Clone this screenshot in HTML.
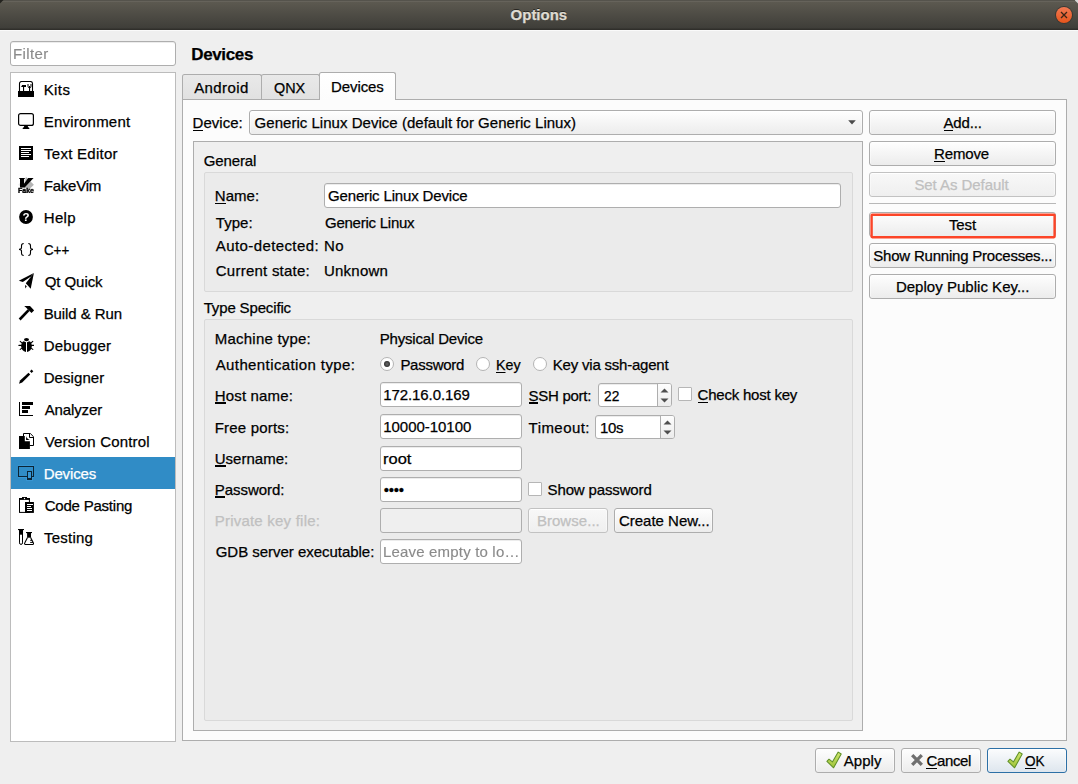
<!DOCTYPE html>
<html><head><meta charset="utf-8"><title>Options</title>
<style>
html,body{margin:0;padding:0}
body{width:1078px;height:784px;overflow:hidden;background:#efefef;position:relative;font-family:"Liberation Sans",sans-serif;font-size:15px;color:#000}
div,span,svg{position:absolute;box-sizing:border-box}
.t{white-space:pre;line-height:20px;height:20px;font-size:15px;-webkit-text-stroke:0.25px currentColor}
.t u{text-decoration:none;background:linear-gradient(currentColor,currentColor) no-repeat 0 16px/100% 1px}
#titlebar{left:0;top:0;width:1078px;height:30px;background:linear-gradient(#55534c 0,#55534c 1px,#66635b 1px,#66635b 2px,#5c5950 2px,#3f3e39 28px,#302f2b 29px,#302f2b 30px)}
#tbhl{left:0;top:30px;width:1078px;height:1px;background:#fafafa}
#cornerl{left:0;top:0;width:3.5px;height:3.5px;background:#24231f}
#cornerr{left:1074.5px;top:0;width:3.5px;height:3.5px;background:#d6d6d6}
.title{text-shadow:0 -1px 0 rgba(0,0,0,.55)}
#close{left:1055px;top:6px;width:18px;height:18px;border-radius:9px;background:#3a3833}
#close i{position:absolute;left:1px;top:1px;width:16px;height:16px;border-radius:8px;background:linear-gradient(#f27a54,#e6551c)}
.edit{background:#fff;border:1px solid #aeaeae;border-radius:3px;height:25px;box-shadow:inset 0 1px 0 #ececec}
.edit.dis{background:#efefef;box-shadow:none}
.btn{border:1px solid #adadad;border-radius:3px;height:25px;background:linear-gradient(#fefefe,#ececec);box-shadow:inset 0 1px 0 rgba(255,255,255,.95),inset 1px 0 0 rgba(255,255,255,.45),inset -1px 0 0 rgba(255,255,255,.45)}
.btn.dis{border-color:#c2c2c2;background:linear-gradient(#f8f8f8,#efefef)}
#list{left:10px;top:72px;width:166px;height:670px;background:#fff;border:1px solid #bcbcbc}
#sel{left:11px;top:457px;width:164px;height:32px;background:#308cc6}
#pane{left:182px;top:99px;width:885px;height:642px;background:#fcfcfc;border:1px solid #adadad}
.tab{border:1px solid #adadad;border-bottom:none;border-radius:2.5px 2.5px 0 0;background:linear-gradient(#e9e9e9,#e1e1e1)}
.tab.sel{background:linear-gradient(#ffffff,#fcfcfc)}
#oframe{left:193px;top:141px;width:670px;height:590px;background:#efefef;border:1px solid #adadad}
.gb{background:#ebebeb;border:1px solid #d9d9d9;border-radius:2px}
.radio{width:14px;height:14px;border-radius:7px;border:1px solid #b4b4b4;background:#fff}
.radio.on::after{content:"";position:absolute;left:3px;top:3px;width:6px;height:6px;border-radius:3px;background:radial-gradient(#5c5c5c 20%,#2c2c2c 72%)}
.chk{width:14px;height:14px;border:1px solid #b6b6b6;background:#fff;border-radius:1px}
.spin i{position:absolute;left:58px;top:0;width:1px;height:22px;background:#aeaeae}
.spin i::after{content:"";position:absolute;left:1px;top:0;width:13px;height:22px;background:linear-gradient(#fdfdfd,#ececec);border-radius:0 2px 2px 0}
.sep{background:#b8b8b8;height:1px}
#icons{z-index:5;left:0;top:0}
#texts{z-index:6;left:0;top:0}
.t.lb u{background-position:0 15px;background-size:100% 2px}
.t.ph{will-change:transform;-webkit-text-stroke:0.15px currentColor}

</style></head>
<body>
<div id="titlebar"></div>
<div id="cornerl" style="clip-path:polygon(0 0,100% 0,0 100%)"></div>
<div id="cornerr" style="clip-path:polygon(0 0,100% 0,100% 100%)"></div>
<div id="tbhl"></div>
<div id="close"><i></i><svg style="left:5px;top:5px" width="8" height="8" viewBox="0 0 8 8"><path d="M1 1L7 7M7 1L1 7" stroke="#3b2416" stroke-width="1.3" fill="none"/></svg></div>

<div class="edit" style="left:10px;top:41px;width:166px"></div>
<div id="list"></div>
<div id="sel"></div>
<div id="icons">
<!-- list icons: each 16x16 svg -->
<svg class="ic" style="left:18px;top:81px" width="16" height="16" viewBox="0 0 16 16"><rect x="0" y="10" width="16" height="6" fill="#000"/><path d="M1.5 10V2.6a2.1 2.1 0 0 1 2.1-2.1H12.4a2.1 2.1 0 0 1 2.1 2.1V10" fill="none" stroke="#000" stroke-width="1.1"/><path d="M3 6L4.2 4H8V6Z" fill="#000"/><rect x="5" y="5.5" width="1.1" height="5" fill="#000"/><path d="M10 3v2.3a1.5 1.5 0 0 0 3 0V3" fill="none" stroke="#000" stroke-width="1"/><rect x="11" y="5" width="1.1" height="5.5" fill="#000"/></svg>
<svg class="ic" style="left:18px;top:113px" width="16" height="16" viewBox="0 0 16 16"><rect x="0.6" y="0.6" width="14.8" height="11.8" rx="2" fill="none" stroke="#000" stroke-width="1.2"/><path d="M6.3 12.5H9.7L10 14L11.3 15V16H4.7V15L6 14Z" fill="#000"/></svg>
<svg class="ic" style="left:18px;top:145px" width="16" height="16" viewBox="0 0 16 16"><rect x="1" y="1" width="14" height="14" fill="#000"/><path d="M3 3.5H13M3 5.5H13M3 7.5H11M3 9.5H13M3 11.5H11" stroke="#fff" stroke-width="1"/></svg>
<svg class="ic" style="left:18px;top:177px;will-change:transform" width="16" height="16" viewBox="0 0 16 16"><path d="M8 0L15.8 7.8L8 15.6L0.2 7.8Z" fill="#e9e9e9"/><path d="M8 0L15.8 7.8L11 12.6L6 10.6Z" fill="#b4b4b4"/><path d="M1 1H7V1.8H6V6.8L10.2 1H15.6L6.6 10.6H2V1.8H1Z" fill="#000"/><text x="0" y="15.9" font-family="Liberation Sans, sans-serif" font-weight="bold" font-size="6.9" textLength="16" lengthAdjust="spacingAndGlyphs" fill="#000" stroke="#000" stroke-width="0.35">Fake</text></svg>
<svg class="ic" style="left:18px;top:209px;will-change:transform" width="16" height="16" viewBox="0 0 16 16"><circle cx="8" cy="8" r="6.9" fill="#000"/><text x="8.1" y="12.3" text-anchor="middle" font-family="Liberation Sans, sans-serif" font-weight="bold" font-size="11.5" fill="#fff">?</text></svg>
<svg class="ic" style="left:18px;top:241px" width="16" height="16" viewBox="0 0 16 16"><path d="M5.7 2.5C3.8 2.5 3.5 3.6 3.5 4.8V6.6C3.5 7.6 2.6 8.4 1 8.4C2.6 8.4 3.5 9.2 3.5 10.2V12.2C3.5 13.4 3.8 14.5 5.7 14.5M10.3 2.5C12.2 2.5 12.5 3.6 12.5 4.8V6.6C12.5 7.6 13.4 8.4 15 8.4C13.4 8.4 12.5 9.2 12.5 10.2V12.2C12.5 13.4 12.2 14.5 10.3 14.5" fill="none" stroke="#000" stroke-width="1.1" stroke-linecap="butt"/></svg>
<svg class="ic" style="left:18px;top:273px" width="16" height="16" viewBox="0 0 16 16"><path d="M15.9 0L0.8 7.7L4.8 9.1L13 3.4Z" fill="#000"/><path d="M15.9 0L7.8 10.3L12.7 15.7Z" fill="#000"/><path d="M7 12L8.8 13.2L7.3 15.6Z" fill="#000"/></svg>
<svg class="ic" style="left:18px;top:305px" width="16" height="16" viewBox="0 0 16 16"><path d="M0.7 13.4L2.6 15.4L11.6 6L9.7 4.2Z" fill="#000"/><path d="M6.2 1.1H12L16.2 5.4L13.5 8.1L9.5 4.1C8.6 3 7.5 2 6.2 1.1Z" fill="#000"/></svg>
<svg class="ic" style="left:18px;top:337px" width="16" height="16" viewBox="0 0 16 16"><ellipse cx="8.5" cy="2.6" rx="2.5" ry="1.6" fill="#000"/><path d="M8 5.2L5.6 4.2C3.6 5 3.2 7 3.2 9.2C3.2 12 5 14.4 8 15Z" fill="#000"/><path d="M9 5.2L11.4 4.2C13.4 5 13.8 7 13.8 9.2C13.8 12 12 14.4 9 15Z" fill="#000"/><path d="M0.9 8.4H3.5M13.5 8.4H16.1M3.6 5.6L2.2 4.3M13.4 5.6L14.8 4.3M3.6 11.4L2.2 12.4M13.4 11.4L14.8 12.4" stroke="#000" stroke-width="1.1" stroke-linecap="round"/></svg>
<svg class="ic" style="left:18px;top:369px" width="16" height="16" viewBox="0 0 16 16"><path d="M1 14.7L2 11.6L10.5 3.7L12.2 5.4L4.2 13.5Z" fill="#000"/><path d="M13.6 0.6L15.3 2.3L13.6 4L11.9 2.3Z" fill="#000"/></svg>
<svg class="ic" style="left:18px;top:401px" width="16" height="16" viewBox="0 0 16 16"><rect x="1" y="1" width="1" height="14" fill="#000"/><rect x="1" y="14" width="14" height="1" fill="#000"/><rect x="4" y="1" width="11" height="3" fill="#000"/><rect x="4" y="5" width="8" height="3" fill="#000"/><rect x="4" y="9" width="6" height="3" fill="#000"/></svg>
<svg class="ic" style="left:18px;top:433px" width="16" height="16" viewBox="0 0 16 16"><path d="M5.5 3.5V0.5H12.3L15.5 3.7V12.5H11.5" fill="#fff" stroke="#000" stroke-width="1"/><path d="M11.5 0.8V4.5H15.2" fill="none" stroke="#000" stroke-width="1"/><path d="M1 3.1H6.8V8.2H11.9V15.9H1Z" fill="#000"/><path d="M8.1 3.3V6.9H11.8C10 6.4 8.6 5 8.1 3.3Z" fill="#000"/></svg>
<svg class="ic" style="left:18px;top:465px" width="16" height="16" viewBox="0 0 16 16"><g fill="none" stroke="#43a3e4" stroke-width="2.8" opacity=".5"><rect x="0.5" y="1.5" width="15" height="10"/><rect x="9.5" y="6.5" width="4" height="8"/></g><rect x="0.5" y="1.5" width="15" height="10" fill="#308cc6" stroke="#0b2434" stroke-width="1"/><rect x="9.5" y="6.5" width="4" height="8" fill="#3896d4" stroke="#0b2434" stroke-width="1"/><rect x="9" y="13" width="5" height="2" fill="#0b2434"/></svg>
<svg class="ic" style="left:18px;top:497px" width="16" height="16" viewBox="0 0 16 16"><rect x="1.5" y="1.5" width="9.9" height="13.9" fill="#fff" stroke="#000" stroke-width="1"/><rect x="1" y="1" width="10.9" height="1.9" fill="#000"/><rect x="4" y="0" width="5" height="1.5" fill="#000"/><circle cx="6.5" cy="1.5" r="0.65" fill="#fff"/><rect x="7" y="5" width="8.9" height="10.9" fill="#000"/><path d="M9 7.5H15M9 9.5H13M9 11.5H14M9 13.5H14" stroke="#fff" stroke-width="1"/></svg>
<svg class="ic" style="left:18px;top:529px" width="16" height="16" viewBox="0 0 16 16"><rect x="0" y="0" width="6" height="1.1" fill="#000"/><path d="M1.5 1V13.9a1.5 1.5 0 0 0 3 0V1" fill="#fff" stroke="#000" stroke-width="1"/><rect x="1" y="1" width="4" height="4.7" fill="#000"/><rect x="8" y="3" width="6" height="1.1" fill="#000"/><rect x="9.1" y="4" width="3.9" height="4.7" fill="#000"/><path d="M9.5 8.6L6.7 14A1 1 0 0 0 7.6 15.5H14.5A1 1 0 0 0 15.4 14L12.6 8.6" fill="none" stroke="#000" stroke-width="1.1"/><path d="M12.2 11.3H14.2M12.2 13.4H15.2" stroke="#000" stroke-width="1"/></svg>
<!-- dialog button icons -->
<svg class="ic" style="left:824px;top:750px" width="20" height="20" viewBox="824 750 20 20"><defs><linearGradient id="gck" x1="0" y1="0" x2="0" y2="1"><stop offset="0" stop-color="#cfe66e"/><stop offset="1" stop-color="#9fc338"/></linearGradient></defs><path d="M826.9 761.3L829 759.2L832.4 761.9L838.2 752.1L841.2 754L833.6 767.8Z" fill="url(#gck)" stroke="#5f9027" stroke-width="1.05" stroke-linejoin="round"/></svg>
<svg class="ic" style="left:909px;top:752px" width="16" height="16" viewBox="909 752 16 16"><path d="M912.2 755.2L921.8 764.8M921.8 755.2L912.2 764.8" stroke="#6f6f6f" stroke-width="3.3" fill="none"/></svg>
<svg class="ic" style="left:1004.7px;top:750px" width="20" height="20" viewBox="824 750 20 20"><path d="M826.9 761.3L829 759.2L832.4 761.9L838.2 752.1L841.2 754L833.6 767.8Z" fill="url(#gck)" stroke="#5f9027" stroke-width="1.05" stroke-linejoin="round"/></svg>
</div>

<div id="pane"></div>
<div class="tab" style="left:182px;top:74px;width:80px;height:25px"></div>
<div class="tab" style="left:261px;top:74px;width:59px;height:25px"></div>
<div class="tab sel" style="left:319px;top:72px;width:77px;height:28px"></div>

<div class="btn" style="left:249px;top:110px;width:614px"></div>
<svg style="left:847.5px;top:119.8px" width="8" height="5" viewBox="0 0 8 5"><path d="M0.2 0.2H7.8L4 4.5Z" fill="#4b4b4b"/></svg>

<div class="btn" style="left:869px;top:110px;width:187px"></div>
<div class="btn" style="left:869px;top:141px;width:187px"></div>
<div class="btn dis" style="left:869px;top:172px;width:187px"></div>
<div class="sep" style="left:869px;top:203px;width:187px"></div>
<div class="btn" style="left:869px;top:212px;width:187px"></div>
<svg style="left:868px;top:210px" width="192" height="32" viewBox="868 210 192 32"><rect x="871.6" y="214.7" width="183" height="22.5" rx="0.6" fill="none" stroke="#fc4528" stroke-width="2.4"/></svg>
<div class="btn" style="left:869px;top:243px;width:187px"></div>
<div class="btn" style="left:869px;top:274px;width:187px"></div>

<div id="oframe"></div>
<div class="gb" style="left:204px;top:172px;width:649px;height:120px"></div>
<div class="gb" style="left:204px;top:319px;width:649px;height:402px"></div>

<div class="edit" style="left:324px;top:183px;width:517px"></div>

<div class="radio on" style="left:380px;top:357px"></div>
<div class="radio" style="left:476px;top:357px"></div>
<div class="radio" style="left:532.5px;top:357px"></div>

<div class="edit" style="left:380px;top:382px;width:142px"></div>
<div class="edit" style="left:380px;top:414px;width:142px"></div>
<div class="edit" style="left:380px;top:446px;width:142px"></div>
<div class="edit" style="left:380px;top:477px;width:142px"></div>
<div class="edit dis" style="left:380px;top:508px;width:142px"></div>
<div class="edit" style="left:380px;top:539px;width:142px"></div>

<div class="edit spin" style="left:598px;top:383px;width:74px;height:24px"><i></i><svg style="left:60.6px;top:4.3px" width="9" height="5" viewBox="0 0 9 5"><path d="M0.5 4.6L4.5 0.4L8.5 4.6Z" fill="#4e4e4e"/></svg><svg style="left:60.6px;top:13.7px" width="9" height="5" viewBox="0 0 9 5"><path d="M0.5 0.4L4.5 4.6L8.5 0.4Z" fill="#4e4e4e"/></svg></div>
<div class="edit spin" style="left:595px;top:415px;width:80px;height:24px"><i style="left:64px"></i><svg style="left:66.6px;top:4.3px" width="9" height="5" viewBox="0 0 9 5"><path d="M0.5 4.6L4.5 0.4L8.5 4.6Z" fill="#4e4e4e"/></svg><svg style="left:66.6px;top:13.7px" width="9" height="5" viewBox="0 0 9 5"><path d="M0.5 0.4L4.5 4.6L8.5 0.4Z" fill="#4e4e4e"/></svg></div>

<div class="chk" style="left:678px;top:387px"></div>
<div class="chk" style="left:528px;top:482px"></div>

<div class="btn dis" style="left:528px;top:508px;width:80px"></div>
<div class="btn" style="left:614px;top:508px;width:99px"></div>

<div class="btn" style="left:815px;top:748px;width:80px"></div>
<div class="btn" style="left:901px;top:748px;width:80px"></div>
<div class="btn" style="left:987px;top:748px;width:80px;border-color:#2d70a6;background:linear-gradient(#fbfcfd,#dee6ee)"></div>



<div id="texts">
<span class="t title" style="left:510.60px;top:5px;letter-spacing:-0.020px;color:#dfdbd2;font-weight:bold;">Options</span>
<span class="t ph" style="left:13.00px;top:44px;letter-spacing:0.393px;color:#8a8a8a;">Filter</span>
<span class="t" style="left:43.70px;top:80px;letter-spacing:0.398px;">Kits</span>
<span class="t" style="left:43.70px;top:112px;letter-spacing:0.226px;">Environment</span>
<span class="t" style="left:44.00px;top:144px;letter-spacing:0.273px;">Text Editor</span>
<span class="t" style="left:43.70px;top:176px;letter-spacing:-0.219px;">FakeVim</span>
<span class="t" style="left:43.70px;top:208px;letter-spacing:0.364px;">Help</span>
<span class="t" style="left:44.00px;top:240px;transform:scaleX(0.8884);transform-origin:0 0;">C++</span>
<span class="t" style="left:44.70px;top:272px;letter-spacing:-0.064px;">Qt Quick</span>
<span class="t" style="left:43.70px;top:304px;letter-spacing:-0.087px;">Build &amp; Run</span>
<span class="t" style="left:43.70px;top:336px;letter-spacing:0.216px;">Debugger</span>
<span class="t" style="left:43.70px;top:368px;letter-spacing:0.081px;">Designer</span>
<span class="t" style="left:44.70px;top:400px;letter-spacing:-0.123px;">Analyzer</span>
<span class="t" style="left:44.70px;top:432px;letter-spacing:0.163px;">Version Control</span>
<span class="t" style="left:43.70px;top:464px;letter-spacing:-0.125px;color:#fff;">Devices</span>
<span class="t" style="left:44.70px;top:496px;letter-spacing:-0.211px;">Code Pasting</span>
<span class="t" style="left:44.00px;top:528px;letter-spacing:0.236px;">Testing</span>
<span class="t" style="left:191.30px;top:45px;letter-spacing:-0.370px;font-size:17px;font-weight:bold;">Devices</span>
<span class="t" style="left:194.20px;top:78px;letter-spacing:0.407px;">Android</span>
<span class="t" style="left:274.40px;top:78px;transform:scaleX(0.9600);transform-origin:0 0;">QNX</span>
<span class="t" style="left:331.10px;top:77px;letter-spacing:-0.108px;">Devices</span>
<span class="t" style="left:192.60px;top:113px;letter-spacing:0.008px;"><u>D</u>evice:</span>
<span class="t" style="left:254.60px;top:113px;letter-spacing:0.027px;">Generic Linux Device (default for Generic Linux)</span>
<span class="t" style="left:203.70px;top:151px;letter-spacing:-0.122px;">General</span>
<span class="t" style="left:214.80px;top:186px;letter-spacing:0.047px;"><u>N</u>ame:</span>
<span class="t" style="left:328.00px;top:186px;letter-spacing:-0.154px;">Generic Linux Device</span>
<span class="t" style="left:215.80px;top:213px;letter-spacing:0.020px;">Type:</span>
<span class="t" style="left:325.00px;top:213px;letter-spacing:-0.246px;">Generic Linux</span>
<span class="t" style="left:215.80px;top:236px;letter-spacing:0.400px;">Auto-detected:</span>
<span class="t" style="left:324.00px;top:236px;letter-spacing:0.367px;">No</span>
<span class="t" style="left:215.80px;top:261px;letter-spacing:0.238px;">Current state:</span>
<span class="t" style="left:324.00px;top:261px;letter-spacing:0.218px;">Unknown</span>
<span class="t" style="left:203.70px;top:298px;letter-spacing:-0.151px;">Type Specific</span>
<span class="t" style="left:214.80px;top:329px;letter-spacing:0.215px;">Machine type:</span>
<span class="t" style="left:379.70px;top:329px;letter-spacing:-0.174px;">Physical Device</span>
<span class="t" style="left:215.70px;top:355px;letter-spacing:0.395px;">Authentication type:</span>
<span class="t" style="left:400.40px;top:355px;letter-spacing:-0.274px;">Password</span>
<span class="t" style="left:495.75px;top:355px;transform:scaleX(0.9508);transform-origin:0 0;"><u>K</u>ey</span>
<span class="t" style="left:552.80px;top:355px;letter-spacing:-0.210px;">Key via ssh-agent</span>
<span class="t lb" style="left:214.70px;top:386px;letter-spacing:0.174px;"><u>H</u>ost name:</span>
<span class="t" style="left:383.20px;top:385px;letter-spacing:-0.086px;">172.16.0.169</span>
<span class="t lb" style="left:528.60px;top:386px;letter-spacing:-0.282px;"><u>S</u>SH port:</span>
<span class="t" style="left:603.80px;top:386px;transform:scaleX(0.9179);transform-origin:0 0;">22</span>
<span class="t" style="left:697.50px;top:385px;letter-spacing:-0.211px;"><u>C</u>heck host key</span>
<span class="t" style="left:214.70px;top:418px;letter-spacing:0.194px;">Free ports:</span>
<span class="t" style="left:383.20px;top:417px;letter-spacing:-0.028px;">10000-10100</span>
<span class="t" style="left:528.60px;top:418px;letter-spacing:0.439px;">Timeout:</span>
<span class="t" style="left:600.00px;top:418px;letter-spacing:-0.342px;">10s</span>
<span class="t lb" style="left:214.70px;top:449px;letter-spacing:0.026px;"><u>U</u>sername:</span>
<span class="t" style="left:382.70px;top:449px;transform:scaleX(1.0981);transform-origin:0 0;">root</span>
<span class="t lb" style="left:214.70px;top:480px;letter-spacing:-0.032px;"><u>P</u>assword:</span>
<span class="t" style="left:383.70px;top:480px;letter-spacing:-0.218px;">••••</span>
<span class="t" style="left:547.60px;top:480px;letter-spacing:-0.145px;">Show password</span>
<span class="t" style="left:214.70px;top:511px;letter-spacing:0.223px;color:#c0c0c0;">Private key file:</span>
<span class="t" style="left:536.90px;top:511px;letter-spacing:0.043px;color:#c0c0c0;">Browse...</span>
<span class="t" style="left:619.00px;top:511px;letter-spacing:-0.017px;">Create New...</span>
<span class="t" style="left:215.70px;top:542px;letter-spacing:-0.027px;">GDB server executable:</span>
<span class="t ph" style="left:383.10px;top:542px;letter-spacing:0.176px;color:#8a8a8a;">Leave empty to lo…</span>
<span class="t" style="left:943.50px;top:113px;letter-spacing:-0.165px;"><u>A</u>dd...</span>
<span class="t" style="left:934.00px;top:144px;letter-spacing:-0.142px;"><u>R</u>emove</span>
<span class="t" style="left:914.40px;top:175px;letter-spacing:-0.063px;color:#c0c0c0;">Set As Default</span>
<span class="t" style="left:949.00px;top:215px;letter-spacing:-0.147px;">Test</span>
<span class="t" style="left:873.30px;top:246px;letter-spacing:-0.212px;">Show Running Processes...</span>
<span class="t" style="left:895.90px;top:277px;letter-spacing:0.024px;">Deploy Public Key...</span>
<span class="t" style="left:843.80px;top:751px;letter-spacing:0.020px;">Apply</span>
<span class="t" style="left:926.40px;top:751px;letter-spacing:-0.332px;"><u>C</u>ancel</span>
<span class="t" style="left:1024.90px;top:751px;transform:scaleX(0.9046);transform-origin:0 0;"><u>O</u>K</span>
</div>
</body></html>
